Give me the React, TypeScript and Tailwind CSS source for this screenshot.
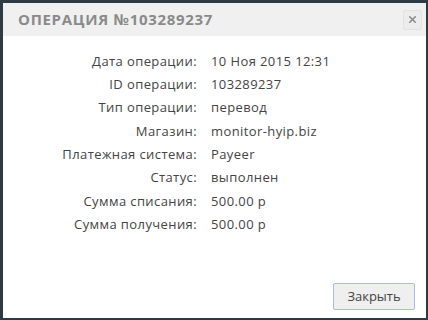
import { X } from "lucide-react";

export default function App() {
  const rows = [
    ["Дата операции:", "10 Ноя 2015 12:31"],
    ["ID операции:", "103289237"],
    ["Тип операции:", "перевод"],
    ["Магазин:", "monitor-hyip.biz"],
    ["Платежная система:", "Payeer"],
    ["Статус:", "выполнен"],
    ["Сумма списания:", "500.00 р"],
    ["Сумма получения:", "500.00 р"],
  ];

  return (
    <div className="w-[428px] h-[320px] bg-[#2f3b44] pt-[3px] pl-[3px] pr-[2px] pb-[2px] font-['Open_Sans',sans-serif]">
      <div className="w-full h-full bg-white flex flex-col">
        <div className="h-[33px] bg-[#f0f0f0] flex items-center justify-between pl-[15px] pr-[4px]">
          <h1 className="text-[15px] font-bold tracking-[0.7px] text-[#8a8a8a]">ОПЕРАЦИЯ №103289237</h1>
          <button className="w-[19px] h-[20px] rounded-[2px] border border-[#e2e2e2] bg-[#ececec] flex items-center justify-center">
            <X size={11} strokeWidth={3.5} className="text-[#8c8c8c]" />
          </button>
        </div>

        <div className="flex-1 pt-[14px]">
          {rows.map(([label, value]) => (
            <div key={label} className="flex items-center h-[23.3px] text-[13px] tracking-[0.4px] text-[#444]">
              <div className="w-[194px] text-right">{label}</div>
              <div className="pl-[14px]">{value}</div>
            </div>
          ))}
        </div>

        <div className="flex justify-end pr-[11px] pb-[8px]">
          <button className="w-[82px] h-[27px] border border-[#a9bde3] bg-[#efefef] rounded-[2px] text-[13px] text-[#444]">
            Закрыть
          </button>
        </div>
      </div>
    </div>
  );
}
